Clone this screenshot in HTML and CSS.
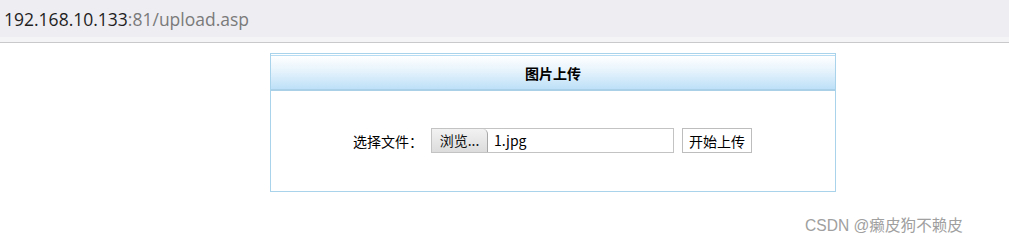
FILE: index.html
```html
<!DOCTYPE html>
<html lang="zh-CN">
<head>
    <meta charset="UTF-8">
    <title>upload.asp</title>
    <link rel="stylesheet" href="styles.css">
</head>
<body>
    <div class="address-bar">
        <span class="host">192.168.10.133</span><span class="path">:81/upload.asp</span>
    </div>
    <div class="address-shadow"></div>

    <div class="upload-box">
        <div class="upload-title">图片上传</div>
        <form class="upload-row">
            <label class="file-label">选择文件：</label>
            <div class="file-input">
                <span class="file-browse">浏览...</span>
                <span class="file-name">1.jpg</span>
            </div>
            <button type="button" class="submit-btn">开始上传</button>
        </form>
    </div>

    <div class="watermark">CSDN @癞皮狗不赖皮</div>
</body>
</html>
```

FILE: styles.css
```css
/* General Styles */
body {
    margin: 0;
    padding: 0;
    background: #fff;
    font-family: "Noto Sans CJK SC", sans-serif;
    width: 1009px;
    height: 245px;
    overflow: hidden;
    position: relative;
}

.address-bar {
    height: 37px;
    background: #eeedf2;
    padding-left: 4px;
    font-family: "Open Sans", "Noto Sans", sans-serif;
    font-size: 17.5px;
    line-height: 38px;
}

.host {
    color: #1f1f1f;
}

.path {
    color: #7a7a7a;
}

.address-shadow {
    height: 5px;
    background: #f4f4f6;
    border-bottom: 1px solid #c9c9cc;
}

.upload-box {
    width: 564px;
    margin: 10px 0 0 270px;
    border: 1px solid #a9d3ea;
    height: 137px;
}

.upload-title {
    margin-top: 1px;
    height: 33px;
    border-top: 1px solid #b5dcf2;
    border-bottom: 2px solid #a9d0e6;
    background: linear-gradient(to bottom, #ffffff 0%, #e6f3fc 45%, #bde0f8 100%);
    text-align: center;
    font-size: 14px;
    font-weight: bold;
    line-height: 34px;
    color: #000;
}

.upload-row {
    display: flex;
    align-items: center;
    margin: 37px 0 0 82px;
    font-size: 14px;
    color: #000;
}

.file-label {
    width: 78px;
}

.file-input {
    display: flex;
    width: 243px;
    height: 25px;
    border: 1px solid #c3c3c3;
    box-sizing: border-box;
}

.file-browse {
    width: 56px;
    border-right: 1px solid #a7a7a7;
    border-radius: 0 5px 0 0;
    background: linear-gradient(to bottom, #f2f2f2, #dcdcdc);
    box-sizing: border-box;
    text-align: center;
    line-height: 23px;
    color: #111;
}

.file-name {
    padding-left: 6px;
    line-height: 23px;
}

.submit-btn {
    margin-left: 8px;
    height: 25px;
    padding: 0 6px;
    border: 1px solid #bdbdbd;
    background: #fff;
    font-family: "Noto Sans CJK SC", sans-serif;
    font-size: 14px;
    color: #000;
}

.watermark {
    position: absolute;
    left: 805px;
    top: 213px;
    font-family: "Liberation Sans", "Noto Sans CJK SC", sans-serif;
    font-size: 15.6px;
    color: #a0a0a0;
}
```
